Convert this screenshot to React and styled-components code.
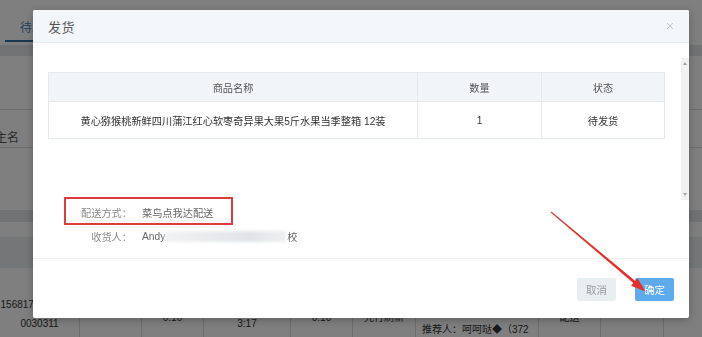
import React from "react";
import styled, { createGlobalStyle } from "styled-components";

const Global = createGlobalStyle`
  html, body { margin: 0; padding: 0; }
  body {
    width: 702px; height: 337px; overflow: hidden; background: #fff;
    font-family: "Liberation Sans", "Noto Sans CJK SC", sans-serif;
  }
  * { box-sizing: border-box; }
`;

/* ---------- background page ---------- */
const Page = styled.div`
  width: 702px;
  height: 337px;
  overflow: hidden;
  font-size: 10px;
  color: #333;
`;
const TabBar = styled.div`
  height: 45px;
  display: flex;
  align-items: flex-end;
  padding-left: 5px;
`;
const Tab = styled.div`
  padding: 0 15px 5px 15px;
  color: #3f87c4;
  font-size: 12px;
  border-bottom: 2px solid #2f6fa6;
  margin-bottom: 3px;
`;
const Band = styled.div`
  height: ${(p) => p.$h}px;
  background: #e2e4e7;
`;
const Spacer = styled.div`
  height: ${(p) => p.$h}px;
  border-bottom: ${(p) => (p.$line ? "1px solid #d6d8db" : "none")};
`;
const FilterRow = styled.div`
  height: 38px;
  display: flex;
  align-items: center;
  gap: 14px;
  padding-top: 16px;
  margin-left: -5px;
  border-bottom: 1px solid #d6d8db;
  color: #555;
  font-size: 12px;
`;
const Caret = styled.span`
  font-size: 8px;
  color: #666;
`;
const TableHead = styled.div`
  height: 31px;
  display: flex;
  align-items: center;
  background: #e9ecef;
  color: #444;
  font-size: 12px;
  padding-left: 62px;
`;
const TableRow = styled.div`
  display: flex;
  height: 90px;
`;
const Cell = styled.div`
  width: ${(p) => p.$w}px;
  flex: none;
  border-right: 1px solid #d9dbde;
  display: flex;
  flex-direction: column;
  align-items: ${(p) => (p.$left ? "flex-start" : "center")};
  justify-content: ${(p) => (p.$start ? "flex-start" : "center")};
  line-height: 19px;
  padding-left: ${(p) => (p.$left ? 6 : 0)}px;
  padding-top: ${(p) => p.$pt || 0}px;
  white-space: nowrap;
  font-size: 10px;
  overflow: visible;
`;

const Overlay = styled.div`
  position: fixed;
  inset: 0;
  background: rgba(0, 0, 0, 0.5);
`;

/* ---------- modal ---------- */
const Modal = styled.div`
  position: absolute;
  left: 33px;
  top: 10px;
  width: 656px;
  height: 308px;
  background: #fff;
  border-radius: 2px;
  box-shadow: 0 2px 8px rgba(0, 0, 0, 0.25);
  display: flex;
  flex-direction: column;
  overflow: hidden;
`;
const Header = styled.div`
  height: 33px;
  flex: none;
  background: #f4f7fa;
  border-bottom: 1px solid #e7ebef;
  display: flex;
  align-items: center;
  justify-content: space-between;
  padding: 0 14px 0 15px;
`;
const Title = styled.div`
  font-size: 13px;
  color: #555;
  letter-spacing: 0.5px;
`;
const Close = styled.div`
  width: 10px;
  height: 10px;
  display: flex;
  align-items: center;
  justify-content: center;
`;
const Body = styled.div`
  flex: none;
  height: 216px;
  padding: 15px 0 0 15px;
  border-bottom: 1px solid #eef0f2;
`;
const ScrollRow = styled.div`
  display: flex;
  height: 142px;
`;
const ScrollContent = styled.div`
  flex: 1;
  padding: 14px 16px 0 0;
`;
const Track = styled.div`
  width: 8px;
  background: #f1f1f1;
  display: flex;
  flex-direction: column;
  justify-content: space-between;
  align-items: center;
  padding: 4px 0;
`;
const Arrow = styled.div`
  width: 0;
  height: 0;
  border-left: 2px solid transparent;
  border-right: 2px solid transparent;
  ${(p) =>
    p.$down
      ? "border-top: 3px solid #a3a3a3;"
      : "border-bottom: 3px solid #a3a3a3;"}
`;
const Table = styled.table`
  width: 100%;
  border-collapse: collapse;
  font-size: 10.2px;
`;
const Th = styled.th`
  height: 29px;
  background: #f2f5f8;
  border: 1px solid #e4e9ed;
  font-weight: normal;
  color: #555;
  width: ${(p) => p.$w || "auto"};
`;
const Td = styled.td`
  height: 37px;
  border: 1px solid #e4e9ed;
  text-align: center;
  color: #333;
`;
const InfoRow = styled.div`
  position: relative;
  height: 24px;
  display: flex;
  align-items: center;
  gap: 10px;
  font-size: 10.2px;
`;
const Label = styled.div`
  width: 84px;
  text-align: right;
  color: #8a8a8a;
`;
const Value = styled.div`
  color: #666;
  display: flex;
  align-items: center;
`;
const Blur = styled.span`
  display: inline-block;
  width: 121px;
  height: 11px;
  margin: 0 1px 0 0;
  background: linear-gradient(90deg, #f2f3f4, #e8eaec 40%, #e1e4e7 70%, #eef0f1);
  filter: blur(1.5px);
`;
const RedBox = styled.div`
  position: absolute;
  left: 16px;
  top: -3px;
  width: 169px;
  height: 28px;
  border: 2px solid #e0393e;
`;
const Footer = styled.div`
  flex: 1;
  display: flex;
  justify-content: flex-end;
  align-items: flex-start;
  gap: 19px;
  padding: 19px 15px 0 0;
`;
const Button = styled.button`
  width: 39px;
  height: 23px;
  border: none;
  border-radius: 2px;
  font-family: inherit;
  font-size: 10.5px;
  padding: 0;
  background: ${(p) => (p.$primary ? "#5eaaea" : "#e9eef1")};
  color: ${(p) => (p.$primary ? "#fff" : "#9a9a9a")};
`;

const Annot = styled.svg`
  position: absolute;
  left: 0;
  top: 0;
  width: 702px;
  height: 337px;
  pointer-events: none;
`;

export default function App() {
  return (
    <>
      <Global />
      <Page>
        <TabBar>
          <Tab>待发货</Tab>
        </TabBar>
        <Band $h={11} />
        <Spacer $h={54} $line />
        <FilterRow>
          <span>主名</span>
          <Caret>▾</Caret>
        </FilterRow>
        <Spacer $h={62} />
        <Band $h={12} />
        <Spacer $h={15} />
        <TableHead>订</TableHead>
        <TableRow>
          <Cell $w={80} $pt={2}>
            <span>15681700000001</span>
            <span>0030311</span>
          </Cell>
          <Cell $w={62}>1</Cell>
          <Cell $w={62} $pt={8}>0.10</Cell>
          <Cell $w={87} $pt={2}>
            <span>2019-07-11</span>
            <span>3:17</span>
          </Cell>
          <Cell $w={62} $pt={8}>0.10</Cell>
          <Cell $w={63} $pt={8}>先行刷新</Cell>
          <Cell $w={123} $left $start $pt={14}>
            <span>张三</span>
            <span>13800000000</span>
            <span>推荐人：呵呵哒◆（372</span>
          </Cell>
          <Cell $w={62} $pt={8}>配送</Cell>
          <Cell $w={63} />
          <Cell $w={39} />
        </TableRow>
      </Page>
      <Overlay />
      <Modal>
        <Header>
          <Title>发货</Title>
          <Close>
            <svg width="8" height="8" viewBox="0 0 8 8">
              <path d="M1 1L7 7M7 1L1 7" stroke="#c4c8cc" strokeWidth="1" />
            </svg>
          </Close>
        </Header>
        <Body>
          <ScrollRow>
            <ScrollContent>
              <Table>
                <thead>
                  <tr>
                    <Th>商品名称</Th>
                    <Th $w="124px">数量</Th>
                    <Th $w="123px">状态</Th>
                  </tr>
                </thead>
                <tbody>
                  <tr>
                    <Td>黄心猕猴桃新鲜四川蒲江红心软枣奇异果大果5斤水果当季整箱 12装</Td>
                    <Td>1</Td>
                    <Td>待发货</Td>
                  </tr>
                </tbody>
              </Table>
            </ScrollContent>
            <Track>
              <Arrow />
              <Arrow $down />
            </Track>
          </ScrollRow>
          <InfoRow>
            <Label>配送方式：</Label>
            <Value>菜鸟点我达配送</Value>
            <RedBox />
          </InfoRow>
          <InfoRow>
            <Label>收货人：</Label>
            <Value>
              Andy<Blur />校
            </Value>
          </InfoRow>
        </Body>
        <Footer>
          <Button>取消</Button>
          <Button $primary>确定</Button>
        </Footer>
      </Modal>
      <Annot viewBox="0 0 702 337">
        <polygon
          points="551.3,211.6 635.3,280.9 637.5,278.2 645.5,291.5 631.1,285.8 633.3,283.1 550.7,212.4"
          fill="#e5302b"
        />
      </Annot>
    </>
  );
}
